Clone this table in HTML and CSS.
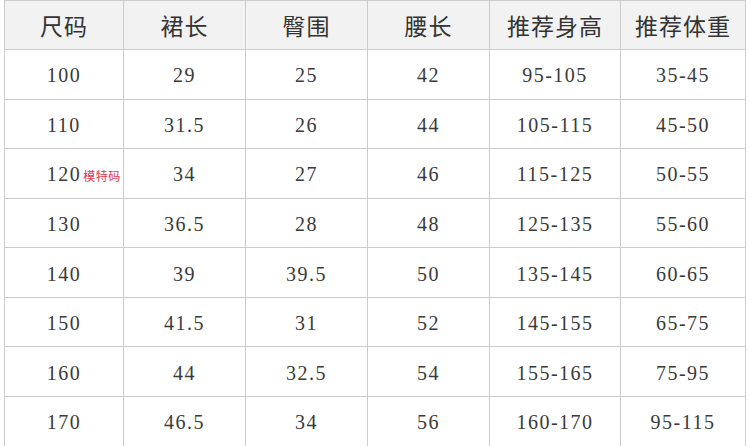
FILE: index.html
```html
<!DOCTYPE html>
<html lang="zh">
<head>
<meta charset="utf-8">
<title>尺码表</title>
<link rel="stylesheet" href="styles.css">
</head>
<body>
<div class="size-table">
  <div class="cell head">尺码</div>
  <div class="cell head">裙长</div>
  <div class="cell head">臀围</div>
  <div class="cell head">腰长</div>
  <div class="cell head">推荐身高</div>
  <div class="cell head">推荐体重</div>

  <div class="cell">100</div><div class="cell">29</div><div class="cell">25</div><div class="cell">42</div><div class="cell">95-105</div><div class="cell">35-45</div>
  <div class="cell">110</div><div class="cell">31.5</div><div class="cell">26</div><div class="cell">44</div><div class="cell">105-115</div><div class="cell">45-50</div>
  <div class="cell"><span class="num">120<span class="tag">模特码</span></span></div><div class="cell">34</div><div class="cell">27</div><div class="cell">46</div><div class="cell">115-125</div><div class="cell">50-55</div>
  <div class="cell">130</div><div class="cell">36.5</div><div class="cell">28</div><div class="cell">48</div><div class="cell">125-135</div><div class="cell">55-60</div>
  <div class="cell">140</div><div class="cell">39</div><div class="cell">39.5</div><div class="cell">50</div><div class="cell">135-145</div><div class="cell">60-65</div>
  <div class="cell">150</div><div class="cell">41.5</div><div class="cell">31</div><div class="cell">52</div><div class="cell">145-155</div><div class="cell">65-75</div>
  <div class="cell">160</div><div class="cell">44</div><div class="cell">32.5</div><div class="cell">54</div><div class="cell">155-165</div><div class="cell">75-95</div>
  <div class="cell">170</div><div class="cell">46.5</div><div class="cell">34</div><div class="cell">56</div><div class="cell">160-170</div><div class="cell">95-115</div>
</div>
</body>
</html>
```

FILE: styles.css
```css
html, body {
  margin: 0;
  padding: 0;
  overflow: hidden;
  background: #ffffff;
}

.size-table {
  display: grid;
  grid-template-columns: 118px 121px 121px 121px 130px 124px;
  grid-template-rows: 48px repeat(8, 48.57px);
  gap: 1px;
  padding: 1px;
  margin-left: 4px;
  width: max-content;
  background: #cccccc;
}

.cell {
  background: #ffffff;
  display: flex;
  align-items: center;
  justify-content: center;
  padding-top: 3px;
  box-sizing: border-box;
  font-family: "Liberation Serif", serif;
  font-size: 20px;
  letter-spacing: 1.5px;
  color: #3a3a3a;
}

.cell.head {
  padding-top: 0;
  background: #f2f2f2;
  font-family: "Noto Sans CJK SC", sans-serif;
  font-size: 23px;
  letter-spacing: 1px;
  color: #333333;
}

.num {
  position: relative;
}

.tag {
  position: absolute;
  left: 100%;
  top: 50%;
  transform: translateY(-50%);
  margin-left: 2px;
  white-space: nowrap;
  font-family: "Noto Sans CJK SC", sans-serif;
  font-size: 12px;
  letter-spacing: 0.5px;
  color: #e8334a;
}
```
